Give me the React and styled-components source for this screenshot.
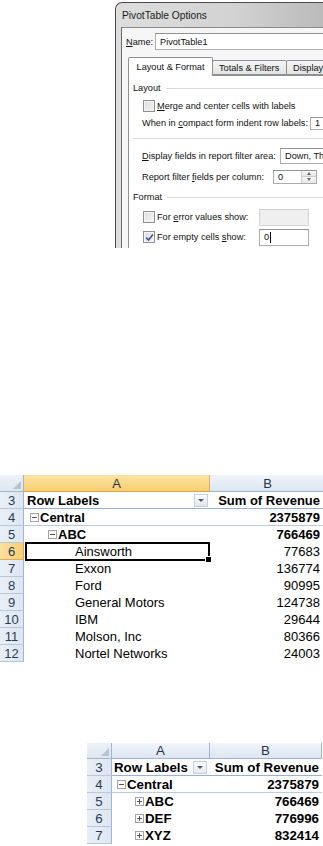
import React from "react";
import styled, { createGlobalStyle } from "styled-components";

const GlobalStyle = createGlobalStyle`
  html, body {
    margin: 0;
    padding: 0;
    background: #fff;
    overflow: hidden;
  }
  body {
    font-family: "Liberation Sans", Arial, sans-serif;
  }
`;

const Page = styled.div`
  width: 323px;
  height: 846px;
  overflow: hidden;
  display: flex;
  flex-direction: column;
`;

/* ---------- dialog ---------- */

const DialogArea = styled.div`
  height: 248px;
  padding: 2px 0 0 115px;
  box-sizing: border-box;
  overflow: hidden;
  flex-shrink: 0;
`;

const Frame = styled.div`
  width: 300px;
  height: 100%;
  box-sizing: border-box;
  border: 1px solid #4a4a4a;
  border-right: none;
  border-bottom: none;
  border-top-left-radius: 7px;
  background: linear-gradient(to right, #dedede, #d2d2d2 40%, #a2a2a2 100%);
  padding-left: 5px;
  display: flex;
  flex-direction: column;
`;

const TitleBar = styled.div`
  height: 24px;
  display: flex;
  align-items: center;
  padding-left: 1px;
  font-size: 10.2px;
  color: #1a1a1a;
`;

const Body = styled.div`
  flex: 1;
  background: #f6f6f6;
  border-left: 1px solid #6a6a6a;
  border-top: 1px solid #8a8a8a;
  display: flex;
  flex-direction: column;
  font-size: 9.2px;
  color: #111;
`;

const NameRow = styled.div`
  display: flex;
  align-items: center;
  height: 17px;
  margin-top: 5px;
  padding-left: 4px;
`;

const Label = styled.span`
  width: ${(p) => p.$w}px;
  flex-shrink: 0;
  white-space: nowrap;
`;

const U = styled.span`
  text-decoration: underline;
`;

const TextBox = styled.div`
  flex: ${(p) => (p.$w ? "none" : "1")};
  width: ${(p) => (p.$w ? `${p.$w}px` : "auto")};
  height: ${(p) => p.$h || 17}px;
  box-sizing: border-box;
  border: 1px solid ${(p) => (p.$disabled ? "#d4d4d4" : "#abadb3")};
  border-top-color: ${(p) => (p.$disabled ? "#cfcfcf" : "#8f939c")};
  background: ${(p) => (p.$disabled ? "#efefef" : "#fff")};
  display: flex;
  align-items: center;
  padding-left: 4px;
  white-space: nowrap;
  overflow: hidden;
  position: relative;
`;

const Caret = styled.span`
  display: inline-block;
  width: 1px;
  height: 11px;
  background: #000;
  margin-left: 1px;
`;

const TabStrip = styled.div`
  display: flex;
  align-items: flex-end;
  height: 18px;
  margin: 7px 0 0 6px;
`;

const Tab = styled.div`
  position: relative;
  z-index: ${(p) => (p.$active ? 2 : 1)};
  width: ${(p) => p.$w}px;
  height: ${(p) => (p.$active ? 19 : 15)}px;
  margin-bottom: ${(p) => (p.$active ? -1 : 0)}px;
  margin-left: ${(p) => (p.$first ? 0 : -1)}px;
  box-sizing: border-box;
  border: 1px solid #8c8f96;
  border-bottom: ${(p) => (p.$active ? "none" : "1px solid #8c8f96")};
  border-radius: 2px 2px 0 0;
  background: ${(p) =>
    p.$active ? "#fff" : "linear-gradient(#f5f5f5, #e4e4e4)"};
  display: flex;
  align-items: center;
  justify-content: ${(p) => (p.$active ? "center" : "flex-start")};
  padding-left: ${(p) => (p.$active ? 0 : 6)}px;
  white-space: nowrap;
  overflow: hidden;
`;

const Panel = styled.div`
  position: relative;
  z-index: 1;
  flex: 1;
  margin-left: 6px;
  border: 1px solid #8c8f96;
  border-right: none;
  border-bottom: none;
  background: #fff;
  padding-top: 3px;
  display: flex;
  flex-direction: column;
`;

const GroupHead = styled.div`
  display: flex;
  align-items: center;
  height: 18px;
  margin-top: ${(p) => p.$mt || 0}px;
  padding-left: 4px;
  &::after {
    content: "";
    flex: 1;
    height: 1px;
    background: #dadada;
    margin-left: 5px;
  }
`;

const Separator = styled.div`
  height: 1px;
  background: #dadada;
  margin: 7px 0 7px 4px;
`;

const OptionRow = styled.div`
  display: flex;
  align-items: center;
  height: ${(p) => p.$h}px;
  margin-top: ${(p) => p.$mt || 0}px;
  padding-left: ${(p) => (p.$check ? 14 : 13)}px;
  white-space: nowrap;
`;

const CheckBox = styled.span`
  width: 12px;
  height: 12px;
  box-sizing: border-box;
  border: 1px solid #8e8f8f;
  background: linear-gradient(135deg, #dcdcdc, #f6f6f6);
  box-shadow: inset 0 0 0 1px #f4f4f4;
  margin-right: 2px;
  flex-shrink: 0;
  display: flex;
  align-items: center;
  justify-content: center;
`;

const SpinButtons = styled.div`
  position: absolute;
  right: 0;
  top: 0;
  bottom: 0;
  width: 14px;
  display: flex;
  flex-direction: column;
  border-left: 1px solid #d0d0d0;
`;

const SpinHalf = styled.div`
  flex: 1;
  background: linear-gradient(#f7f7f7, #e6e6e6);
  border-bottom: ${(p) => (p.$top ? "1px solid #d0d0d0" : "none")};
  display: flex;
  align-items: center;
  justify-content: center;
  &::before {
    content: "";
    border-left: 2.5px solid transparent;
    border-right: 2.5px solid transparent;
    ${(p) =>
      p.$top
        ? "border-bottom: 3px solid #6a6a6a;"
        : "border-top: 3px solid #6a6a6a;"}
  }
`;

const Check = () => (
  <svg width="9" height="9" viewBox="0 0 9 9">
    <path
      d="M1.2 4.6 L3.6 7 L7.9 1.6"
      fill="none"
      stroke="#3b559b"
      strokeWidth="1.6"
    />
  </svg>
);

function Dialog() {
  return (
    <DialogArea>
      <Frame>
        <TitleBar>PivotTable Options</TitleBar>
        <Body>
          <NameRow>
            <Label $w={29}>
              <U>N</U>ame:
            </Label>
            <TextBox>PivotTable1</TextBox>
          </NameRow>
          <TabStrip>
            <Tab $active $first $w={85}>
              Layout &amp; Format
            </Tab>
            <Tab $w={75}>Totals &amp; Filters</Tab>
            <Tab $w={60}>Display</Tab>
          </TabStrip>
          <Panel>
            <GroupHead>Layout</GroupHead>
            <OptionRow $h={18} $check>
              <CheckBox />
              <span>
                <U>M</U>erge and center cells with labels
              </span>
            </OptionRow>
            <OptionRow $h={16}>
              <Label $w={168}>
                When in <U>c</U>ompact form indent row labels:
              </Label>
              <TextBox $h={13}>1</TextBox>
            </OptionRow>
            <Separator />
            <OptionRow $h={18} $mt={1}>
              <Label $w={138}>
                <U>D</U>isplay fields in report filter area:
              </Label>
              <TextBox $h={16}>Down, Then Over</TextBox>
            </OptionRow>
            <OptionRow $h={17} $mt={3}>
              <Label $w={131}>
                Report filter <U>f</U>ields per column:
              </Label>
              <TextBox $w={44} $h={14}>
                0
                <SpinButtons>
                  <SpinHalf $top />
                  <SpinHalf />
                </SpinButtons>
              </TextBox>
            </OptionRow>
            <GroupHead $mt={3}>Format</GroupHead>
            <OptionRow $h={20} $mt={1} $check>
              <CheckBox />
              <Label $w={102}>
                For <U>e</U>rror values show:
              </Label>
              <TextBox $w={50} $disabled />
            </OptionRow>
            <OptionRow $h={20} $check>
              <CheckBox>
                <Check />
              </CheckBox>
              <Label $w={102}>
                For empty cells <U>s</U>how:
              </Label>
              <TextBox $w={50}>
                0<Caret />
              </TextBox>
            </OptionRow>
          </Panel>
        </Body>
      </Frame>
    </DialogArea>
  );
}

/* ---------- spreadsheet ---------- */

const Sheet = styled.div`
  display: grid;
  grid-template-columns: ${(p) => p.$cols};
  grid-template-rows: ${(p) => p.$head}px;
  grid-auto-rows: 17px;
  margin: ${(p) => p.$margin};
  font-size: ${(p) => p.$font}px;
  color: #000;
  flex-shrink: 0;
`;

const Corner = styled.div`
  background: linear-gradient(#eef2f8, #dde6f1);
  border-right: 1px solid #9eb6ce;
  border-bottom: 1px solid #9eb6ce;
  position: relative;
  &::after {
    content: "";
    position: absolute;
    right: 2px;
    bottom: 2px;
    border-left: 8px solid transparent;
    border-bottom: 8px solid #b8c3cf;
  }
`;

const ColHead = styled.div`
  background: ${(p) =>
    p.$active
      ? "linear-gradient(#fce3a2, #f7cf72)"
      : "linear-gradient(#f2f5fa, #dce6f2)"};
  border-right: 1px solid ${(p) => (p.$active ? "#e2b04e" : "#9eb6ce")};
  border-bottom: 1px solid ${(p) => (p.$active ? "#e0a43c" : "#9eb6ce")};
  display: flex;
  align-items: center;
  justify-content: center;
  color: #27334a;
`;

const RowHead = styled.div`
  background: ${(p) =>
    p.$active
      ? "linear-gradient(to right, #fbe0a0, #f6cf76)"
      : "linear-gradient(to right, #e9eff7, #dde6f1)"};
  border-right: 1px solid ${(p) => (p.$active ? "#e0a43c" : "#9eb6ce")};
  border-bottom: 1px solid ${(p) => (p.$active ? "#e2b04e" : "#b6c8dc")};
  display: flex;
  align-items: center;
  justify-content: center;
  color: #2d3a52;
`;

const Cell = styled.div`
  display: flex;
  align-items: center;
  justify-content: ${(p) => (p.$right ? "flex-end" : "flex-start")};
  padding: 0 ${(p) => (p.$right ? p.$pr || 4 : 0)}px 0
    ${(p) => p.$indent || 0}px;
  font-weight: ${(p) => (p.$bold ? "bold" : "normal")};
  border-bottom: 1px solid ${(p) => p.$line || "transparent"};
  white-space: nowrap;
  box-sizing: border-box;
  position: relative;
  ${(p) =>
    p.$selected &&
    `
    border: 2px solid #000;
    margin: -1px 0 -1px 1px;
    padding-left: ${p.$indent - 3}px;
    &::after {
      content: "";
      position: absolute;
      right: -4px;
      bottom: -4px;
      width: 5px;
      height: 5px;
      background: #000;
      border: 1px solid #fff;
    }
  `}
`;

const HeaderLabel = styled.div`
  display: flex;
  align-items: center;
  justify-content: ${(p) => (p.$end ? "flex-end" : "space-between")};
  padding: 0 ${(p) => p.$pr}px 0 ${(p) => p.$pl}px;
  font-weight: bold;
  border-bottom: 1px solid #95b3d7;
`;

const FilterButton = styled.span`
  width: 14px;
  height: 13px;
  box-sizing: border-box;
  border: 1px solid #c6cfdc;
  background: linear-gradient(#fdfdfd, #e3e8f0);
  display: flex;
  align-items: center;
  justify-content: center;
  &::before {
    content: "";
    border-left: 3px solid transparent;
    border-right: 3px solid transparent;
    border-top: 3px solid #505a68;
  }
`;

const Toggle = styled.span`
  width: 9px;
  height: 9px;
  box-sizing: border-box;
  border: 1px solid #a0a4aa;
  background: #fff;
  margin-right: 1px;
  position: relative;
  flex-shrink: 0;
  &::before {
    content: "";
    position: absolute;
    left: 1px;
    right: 1px;
    top: 3px;
    height: 1px;
    background: #555;
  }
  ${(p) =>
    p.$plus &&
    `
    &::after {
      content: "";
      position: absolute;
      top: 1px;
      bottom: 1px;
      left: 3px;
      width: 1px;
      background: #555;
    }
  `}
`;

const pivot1 = [
  { n: 4, label: "Central", value: "2375879", indent: 6, toggle: "minus", bold: true, line: "#b8cce4" },
  { n: 5, label: "ABC", value: "766469", indent: 24, toggle: "minus", bold: true },
  { n: 6, label: "Ainsworth", value: "77683", indent: 51, selected: true },
  { n: 7, label: "Exxon", value: "136774", indent: 51 },
  { n: 8, label: "Ford", value: "90995", indent: 51 },
  { n: 9, label: "General Motors", value: "124738", indent: 51 },
  { n: 10, label: "IBM", value: "29644", indent: 51 },
  { n: 11, label: "Molson, Inc", value: "80366", indent: 51 },
  { n: 12, label: "Nortel Networks", value: "24003", indent: 51 },
];

const pivot2 = [
  { n: 4, label: "Central", value: "2375879", indent: 5, toggle: "minus", bold: true, line: "#b8cce4" },
  { n: 5, label: "ABC", value: "766469", indent: 23, toggle: "plus", bold: true },
  { n: 6, label: "DEF", value: "776996", indent: 23, toggle: "plus", bold: true },
  { n: 7, label: "XYZ", value: "832414", indent: 23, toggle: "plus", bold: true },
];

function Pivot({ rows, cols, head, margin, font, activeCol, labelPad, valuePad, btnPad }) {
  return (
    <Sheet $cols={cols} $head={head} $margin={margin} $font={font}>
      <Corner />
      <ColHead $active={activeCol === "A"}>A</ColHead>
      <ColHead $active={activeCol === "B"}>B</ColHead>

      <RowHead>3</RowHead>
      <HeaderLabel $pl={labelPad} $pr={btnPad}>
        Row Labels
        <FilterButton />
      </HeaderLabel>
      <HeaderLabel $end $pl={0} $pr={valuePad}>
        Sum of Revenue
      </HeaderLabel>

      {rows.map((r) => (
        <React.Fragment key={r.n}>
          <RowHead $active={r.selected}>{r.n}</RowHead>
          <Cell
            $indent={r.indent}
            $bold={r.bold}
            $line={r.line}
            $selected={r.selected}
          >
            {r.toggle && <Toggle $plus={r.toggle === "plus"} />}
            {r.label}
          </Cell>
          <Cell $right $pr={valuePad} $bold={r.bold} $line={r.line}>
            {r.value}
          </Cell>
        </React.Fragment>
      ))}
    </Sheet>
  );
}

export default function App() {
  return (
    <Page>
      <GlobalStyle />
      <Dialog />
      <Pivot
        rows={pivot1}
        cols="24px 186px 116px"
        head={17}
        margin="227px 0 0 0"
        font={13}
        activeCol="A"
        labelPad={3}
        valuePad={6}
        btnPad={2}
      />
      <Pivot
        rows={pivot2}
        cols="25px 98px 112px"
        head={16}
        margin="81px 0 0 87px"
        font={13.3}
        labelPad={2}
        valuePad={3}
        btnPad={3}
      />
    </Page>
  );
}
